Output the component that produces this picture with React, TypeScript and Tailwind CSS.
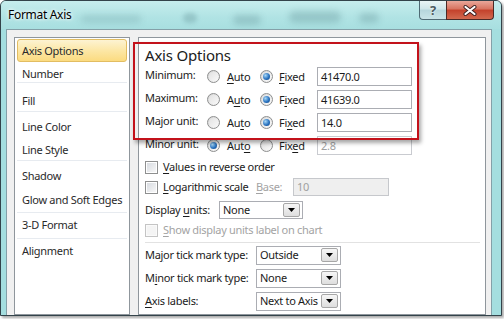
import React from "react";

function Radio({ checked }: { checked?: boolean }) {
  return (
    <span className="relative inline-flex h-[13px] w-[13px] shrink-0 items-center justify-center rounded-full border border-[#8e8f8f] bg-[linear-gradient(135deg,#d4d4d4,#fbfbfb)]">
      <span className="flex h-[9px] w-[9px] items-center justify-center rounded-full bg-[linear-gradient(135deg,#e2e2e2,#f8f8f8)]">
        {checked && (
          <span className="h-[7px] w-[7px] rounded-full bg-[radial-gradient(circle_at_35%_35%,#a7d8f7,#2a73c0_55%,#0d3f7c)]" />
        )}
      </span>
    </span>
  );
}

function Check({ disabled }: { disabled?: boolean }) {
  return (
    <span
      className={
        disabled
          ? "inline-flex h-[13px] w-[13px] shrink-0 items-center justify-center border border-[#c4c4c4] bg-[#fafafa]"
          : "inline-flex h-[13px] w-[13px] shrink-0 items-center justify-center border border-[#8e8f8f] bg-white"
      }
    >
      <span
        className={
          disabled
            ? "h-[9px] w-[9px] bg-[#f4f4f4]"
            : "h-[9px] w-[9px] bg-[linear-gradient(135deg,#d8dce1,#f7f7f7)]"
        }
      />
    </span>
  );
}

function DropBtn() {
  return (
    <span className="ml-auto mr-[2px] flex h-[14px] w-[17px] shrink-0 items-center justify-center rounded-[2px] border border-[#a7a7a7] bg-[linear-gradient(#f6f6f6,#dedede)]">
      <svg width="7" height="4" viewBox="0 0 7 4">
        <path d="M0 0h7L3.5 4z" fill="#000" />
      </svg>
    </span>
  );
}

function Select({ value, className }: { value: string; className: string }) {
  return (
    <div
      className={
        "flex items-center border border-[#abadb3] bg-white pl-[3px] leading-[14px] " +
        className
      }
    >
      <span className="whitespace-nowrap">{value}</span>
      <DropBtn />
    </div>
  );
}

function U({ children }: { children: React.ReactNode }) {
  return <span className="underline decoration-1 underline-offset-[2px]">{children}</span>;
}

const items: { label: string; cls: string }[] = [
  { label: "Number", cls: "h-[20px] pt-[3px] border-b" },
  { label: "Fill", cls: "h-[29px] pt-[10px] border-b" },
  { label: "Line Color", cls: "h-[24px] pt-[7px]" },
  { label: "Line Style", cls: "h-[25px] pt-[6px] border-b" },
  { label: "Shadow", cls: "h-[24px] pt-[7px]" },
  { label: "Glow and Soft Edges", cls: "h-[28px] pt-[7px] border-b" },
  { label: "3-D Format", cls: "h-[26px] pt-[4px] border-b" },
  { label: "Alignment", cls: "h-[24px] pt-[4px]" },
];

function AxisRow({
  label,
  auto,
  fixed,
  value,
  autoChecked,
}: {
  label: React.ReactNode;
  auto: React.ReactNode;
  fixed: React.ReactNode;
  value: string;
  autoChecked?: boolean;
}) {
  return (
    <div className="flex h-[23px] items-center">
      <span className="w-[62px] whitespace-nowrap pb-[3px]">{label}</span>
      <span className="flex w-[53px] items-center gap-[7px]">
        <Radio checked={autoChecked} />
        <span>{auto}</span>
      </span>
      <span className="flex w-[57px] items-center gap-[6px]">
        <Radio checked={!autoChecked} />
        <span>{fixed}</span>
      </span>
      <div
        className={
          autoChecked
            ? "flex h-[19px] w-[95px] items-center border border-[#c9cbd0] bg-white pl-[3px] text-[#a0a0a0]"
            : "flex h-[19px] w-[95px] items-center border border-[#abadb3] bg-white pl-[3px]"
        }
      >
        {value}
      </div>
    </div>
  );
}

export default function App() {
  return (
    <div className="relative h-[319px] w-[504px] overflow-hidden bg-white font-['Noto_Sans',sans-serif] text-[11px] leading-[16px] tracking-[-0.3px] text-[#1b1b1b]">
      <div className="flex h-[316px] w-[502px] flex-col rounded-t-[6px] border border-[#33434a] bg-[#a4dedf] shadow-[2px_2px_3px_rgba(0,0,0,0.35)]">
        {/* title bar */}
        <div className="relative flex h-[28px] shrink-0 items-start overflow-hidden rounded-t-[5px] bg-[linear-gradient(#c6eded,#b0e3e4_60%,#a8dfe0)]">
          <div className="absolute left-[80px] top-[14px] h-[8px] w-[60px] rounded-full bg-[#7fb0b3] opacity-40 blur-[3px]" />
          <div className="absolute left-[182px] top-[12px] h-[10px] w-[14px] rounded-full bg-[#6e9ea2] opacity-40 blur-[2px]" />
          <div className="absolute left-[232px] top-[14px] h-[10px] w-[28px] rounded-full bg-[#6e9ea2] opacity-40 blur-[3px]" />
          <div className="absolute left-[288px] top-[10px] h-[12px] w-[52px] rounded-full bg-[#6e9ea2] opacity-40 blur-[3px]" />
          <div className="absolute left-[358px] top-[12px] h-[10px] w-[20px] rounded-full bg-[#6e9ea2] opacity-40 blur-[3px]" />
          <span className="relative ml-[7px] mt-[6px] text-[12px] leading-[16px] text-black [text-shadow:0_0_5px_#fff,0_0_3px_#fff]">
            Format Axis
          </span>
          <div className="relative ml-auto mr-[7px] flex">
            <div className="flex h-[19px] w-[27px] items-center justify-center rounded-bl-[4px] border border-r-0 border-t-0 border-[#4f6a74] bg-[linear-gradient(#e9f5f6,#cfe6ea_45%,#b6d6dc_50%,#c9e4e8)] text-[13px] font-bold tracking-normal text-[#4a5a60] [text-shadow:0_0_2px_#fff]">
              ?
            </div>
            <div className="flex h-[19px] w-[48px] items-center justify-center rounded-br-[4px] border border-t-0 border-[#4a2a26] bg-[linear-gradient(#e9a79a,#d7735f_45%,#c4412b_50%,#d26a4f)]">
              <svg width="14" height="11" viewBox="0 0 14 11">
                <path d="M2.5 2l9 7M11.5 2l-9 7" stroke="#3a2020" strokeWidth="4" strokeLinecap="round" />
                <path d="M2.5 2l9 7M11.5 2l-9 7" stroke="#fff" strokeWidth="2.2" strokeLinecap="round" />
              </svg>
            </div>
          </div>
        </div>

        {/* body */}
        <div className="flex min-h-0 flex-1 pl-[5px] pr-[9px]">
          <div className="flex flex-1 gap-[8px] border-x border-t border-[#84a0a8] bg-[#f0f0f0] pl-[7px] pr-[5px] pt-[7px]">
            {/* left list */}
            <div className="w-[116px] shrink-0 border border-[#8f969c] bg-white text-[#2a2a2a]">
              <div className="h-[25px] px-[2px] pt-[1px]">
                <div className="flex h-[23px] items-center whitespace-nowrap rounded-[3px] border border-[#e2bd62] bg-[linear-gradient(#fdf3d2,#fce7a6_50%,#fbdb80)] pl-[4px]">
                  Axis Options
                </div>
              </div>
              {items.map((it) => (
                <div key={it.label} className={"mx-[2px] whitespace-nowrap border-[#e7ebf0] pl-[5px] " + it.cls}>
                  {it.label}
                </div>
              ))}
            </div>

            {/* right panel */}
            <div className="flex flex-1 flex-col border border-[#8f969c] bg-white pl-[6px] pt-[7px]">
              <div className="h-[20px] text-[15px] leading-[20px] tracking-[-0.2px] text-[#1b1b1b]">Axis Options</div>
              <AxisRow label="Minimum:" auto={<><U>A</U>uto</>} fixed={<><U>F</U>ixed</>} value="41470.0" />
              <AxisRow label="Maximum:" auto={<>A<U>u</U>to</>} fixed={<>F<U>i</U>xed</>} value="41639.0" />
              <AxisRow label="Major unit:" auto={<>Au<U>t</U>o</>} fixed={<>Fi<U>x</U>ed</>} value="14.0" />
              <AxisRow label="Minor unit:" auto={<>Aut<U>o</U></>} fixed={<>Fix<U>e</U>d</>} value="2.8" autoChecked />

              <div className="flex h-[20px] items-center gap-[5px]">
                <Check />
                <span>
                  <U>V</U>alues in reverse order
                </span>
              </div>
              <div className="flex h-[20px] items-center">
                <span className="flex w-[111px] items-center gap-[5px]">
                  <Check />
                  <span className="whitespace-nowrap">
                    <U>L</U>ogarithmic scale
                  </span>
                </span>
                <span className="w-[37px] text-[#a3a3a3]">
                  <U>B</U>ase:
                </span>
                <div className="flex h-[18px] w-[96px] items-center border border-[#c6c8cc] bg-[#efefef] pl-[3px] text-[#a0a0a0]">
                  10
                </div>
              </div>
              <div className="mt-[3px] flex h-[20px] items-center">
                <span className="w-[74px] whitespace-nowrap">
                  Display <U>u</U>nits:
                </span>
                <Select value="None" className="h-[18px] w-[84px]" />
              </div>
              <div className="flex h-[20px] items-center gap-[5px] text-[#a3a3a3]">
                <Check disabled />
                <span>
                  <U>S</U>how display units label on chart
                </span>
              </div>
              <div className="mr-[5px] mt-[2px] h-px bg-[#e2e2e2]" />
              <div className="mt-[2px] flex h-[20px] items-center">
                <span className="w-[111px] whitespace-nowrap">
                  Ma<U>j</U>or tick mark type:
                </span>
                <Select value="Outside" className="h-[19px] w-[85px]" />
              </div>
              <div className="mt-[3px] flex h-[20px] items-center">
                <span className="w-[111px] whitespace-nowrap">
                  M<U>i</U>nor tick mark type:
                </span>
                <Select value="None" className="h-[19px] w-[85px]" />
              </div>
              <div className="mt-[3px] flex h-[20px] items-center">
                <span className="w-[111px] whitespace-nowrap">
                  <U>A</U>xis labels:
                </span>
                <Select value="Next to Axis" className="h-[19px] w-[85px]" />
              </div>
            </div>
          </div>
        </div>
      </div>

      {/* red highlight */}
      <div className="pointer-events-none absolute left-[133px] top-[42px] h-[98px] w-[286px] border-2 border-[#c3121b] shadow-[2px_3px_4px_rgba(0,0,0,0.35)]" />
    </div>
  );
}
